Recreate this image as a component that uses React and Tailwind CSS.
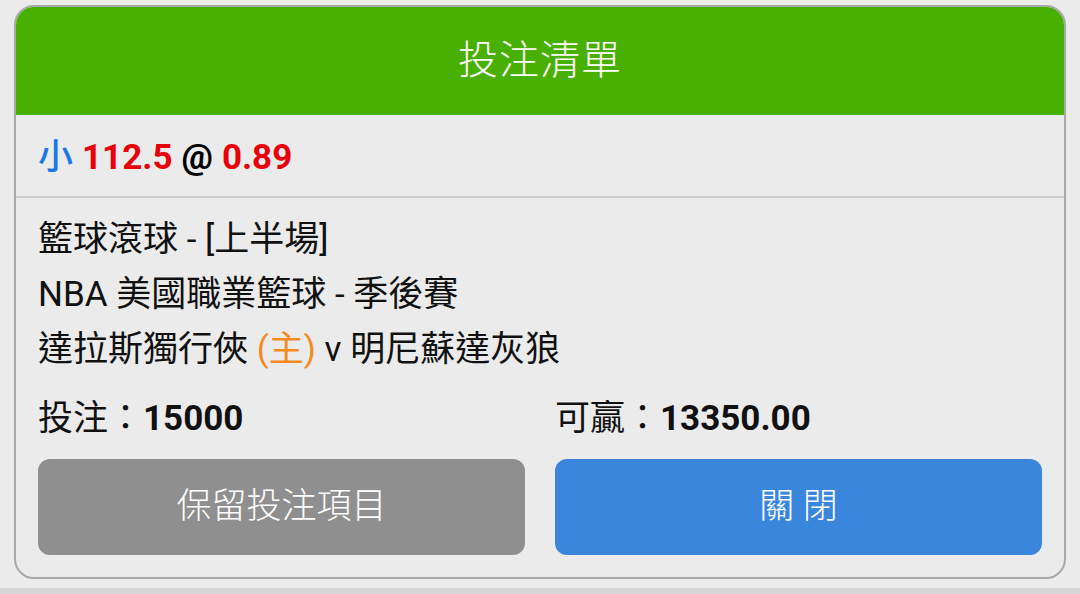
export default function App() {
  const font = { fontFamily: 'Roboto, "Noto Sans CJK TC", sans-serif' };
  return (
    <div className="w-[1080px] h-[594px] bg-[#ececec] flex flex-col overflow-hidden" style={font}>
      <div className="flex-1 pt-[5px] px-[14px]">
        <div className="w-[1052px] h-[574px] rounded-[20px] border-2 border-[#a9a9a9] bg-[#ebebeb] overflow-hidden flex flex-col">
          <div className="h-[110px] -mx-[2px] -mt-[2px] bg-[#48b000] flex items-center justify-center shrink-0 pt-[2px]">
            <span className="text-white text-[40px] font-light leading-none tracking-[1px]">投注清單</span>
          </div>
          <div className="h-[83px] flex items-center px-[22px] pt-[4px] border-b-2 border-[#c9c9c9] shrink-0 text-[35px] font-bold leading-none">
            <span className="text-[#1a78e6] font-medium">小</span>
            <span className="text-[#e8000b] ml-[9px]">112.5</span>
            <span className="text-black ml-[9px]">@</span>
            <span className="text-[#e8000b] ml-[9px]">0.89</span>
          </div>
          <div className="flex-1 flex flex-col px-[22px] pt-[14px] text-[#111] text-[35px]">
            <div className="leading-[55px]">籃球滾球 - [上半場]</div>
            <div className="leading-[55px]">NBA 美國職業籃球 - 季後賽</div>
            <div className="leading-[55px]">
              達拉斯獨行俠 <span className="text-[#f58a1f]">(主)</span> v 明尼蘇達灰狼
            </div>
            <div className="grid grid-cols-2 gap-[30px] mt-[20px] leading-[44px]">
              <div>投注：<span className="font-bold">15000</span></div>
              <div>可贏：<span className="font-bold">13350.00</span></div>
            </div>
            <div className="grid grid-cols-2 gap-[30px] mt-[18px]">
              <div className="h-[96px] rounded-[12px] bg-[#8f8f8f] flex items-center justify-center text-white text-[35px] font-light">保留投注項目</div>
              <div className="h-[96px] rounded-[12px] bg-[#3a86dd] flex items-center justify-center text-white text-[35px] font-light">關 閉</div>
            </div>
          </div>
        </div>
      </div>
      <div className="h-[6px] bg-[#d6d6d6] shrink-0"></div>
    </div>
  );
}
